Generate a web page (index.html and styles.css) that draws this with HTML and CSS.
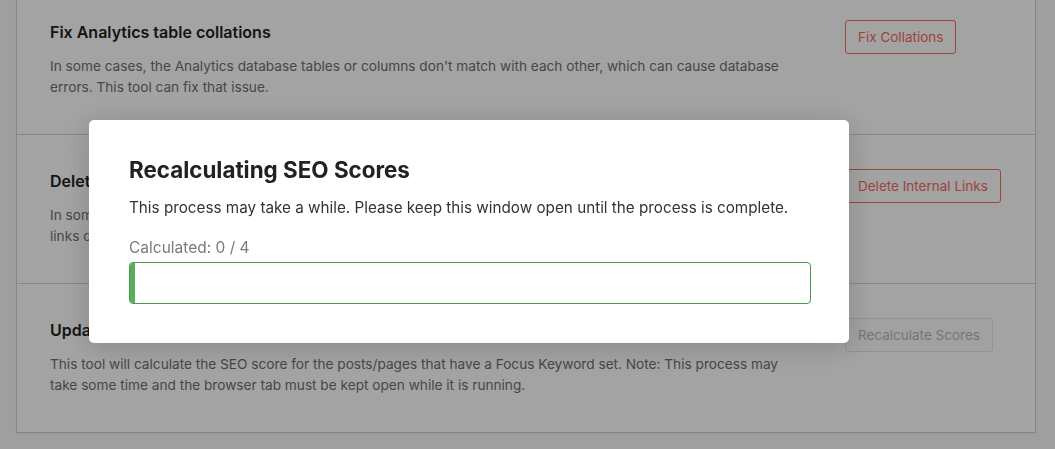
FILE: index.html
```html
<!DOCTYPE html>
<html lang="en">
<head>
<meta charset="utf-8">
<title>Tools</title>
<link rel="stylesheet" href="styles.css">
</head>
<body>
<div class="page">
  <div class="card">
    <div class="row">
      <div class="text">
        <h4 class="row-title">Fix Analytics table collations</h4>
        <p class="row-desc">In some cases, the Analytics database tables or columns don't match with each other, which can cause database errors. This tool can fix that issue.</p>
      </div>
      <div class="action"><button class="btn btn-red">Fix Collations</button></div>
    </div>
    <div class="row">
      <div class="text">
        <h4 class="row-title">Delete Internal Links Data</h4>
        <p class="row-desc">In some instances, the internal links data might show an inflated number or no number at all. Deleting the internal links data might fix the issue.</p>
      </div>
      <div class="action"><button class="btn btn-red">Delete Internal Links</button></div>
    </div>
    <div class="row">
      <div class="text">
        <h4 class="row-title">Update SEO Scores</h4>
        <p class="row-desc">This tool will calculate the SEO score for the posts/pages that have a Focus Keyword set. Note: This process may take some time and the browser tab must be kept open while it is running.</p>
      </div>
      <div class="action"><button class="btn btn-disabled" disabled>Recalculate Scores</button></div>
    </div>
  </div>
</div>

<div class="overlay">
  <div class="modal">
    <h2 class="modal-title">Recalculating SEO Scores</h2>
    <p class="modal-text">This process may take a while. Please keep this window open until the process is complete.</p>
    <div class="count">Calculated: 0 / 4</div>
    <div class="progress"><div class="progress-fill" style="width: 5px"></div></div>
  </div>
</div>
</body>
</html>
```

FILE: styles.css
```css
* { box-sizing: border-box; }

html, body {
  margin: 0;
  padding: 0;
  height: 100%;
}

body {
  background: #f9f9fa;
  font-family: Inter, "Noto Sans", sans-serif;
  color: #222;
  overflow: hidden;
}

.page {
  padding: 0 19px 0 16px;
}

.card {
  margin-top: -15px;
  background: #fff;
  border: 1px solid #d4d4d6;
  box-shadow: 0 1px 2px rgba(0,0,0,0.05);
}

.row {
  display: flex;
  height: 149px;
  padding: 34px 33px 0 33px;
  border-bottom: 1px solid #d4d4d6;
}

.row:last-child {
  border-bottom: 0;
  height: 148px;
}

.text {
  flex: 0 0 745px;
  margin-right: 50px;
}

.row-title {
  margin: 0;
  font-size: 16px;
  line-height: 24px;
  font-weight: 600;
  color: #222;
}

.row-desc {
  margin: 12px 0 0;
  font-size: 13.65px;
  line-height: 21px;
  color: #6f6f6f;
}

.action {
  flex: 0 0 auto;
}

.btn {
  font-family: inherit;
  font-size: 13.5px;
  height: 34px;
  padding: 0 12px;
  background: #fff;
  border-radius: 3px;
  cursor: pointer;
}

.btn-red {
  color: #f86a60;
  border: 1px solid #f86a60;
}

.btn-disabled {
  color: #b8b8b8;
  border: 1px solid #e4e4e4;
  background: #fcfcfc;
}

.overlay {
  position: fixed;
  inset: 0;
  background: rgba(0,0,0,0.36);
  padding: 120px 0 0 89px;
}

.modal {
  width: 760px;
  background: #fff;
  border-radius: 5px;
  padding: 36px 38px 39px 40px;
  box-shadow: 0 4px 30px rgba(0,0,0,0.18);
}

.modal-title {
  margin: 0;
  font-size: 22.4px;
  line-height: 28px;
  font-weight: 700;
  color: #222;
}

.modal-text {
  margin: 12px 0 0;
  font-size: 15.25px;
  line-height: 24px;
  color: #333;
}

.count {
  margin-top: 16px;
  font-size: 15.5px;
  line-height: 24px;
  color: #7a7a7a;
}

.progress {
  margin-top: 2px;
  height: 42px;
  border: 1px solid #4b9a4b;
  border-radius: 4px;
  overflow: hidden;
  display: flex;
}

.progress-fill {
  height: 100%;
  background: #5cae5c;
}
```
